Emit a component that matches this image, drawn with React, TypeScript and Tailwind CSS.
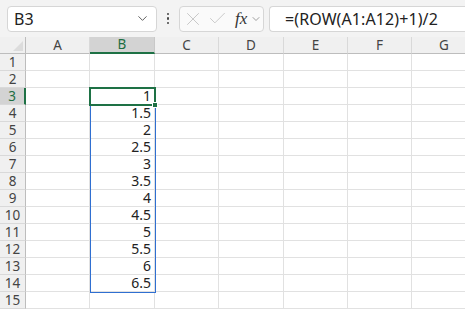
import { ChevronDown, X, Check } from 'lucide-react';

const cols = [
  { label: 'A', w: 'w-[64px]' },
  { label: 'B', w: 'w-[65px]' },
  { label: 'C', w: 'w-[64px]' },
  { label: 'D', w: 'w-[65px]' },
  { label: 'E', w: 'w-[64px]' },
  { label: 'F', w: 'w-[64px]' },
  { label: 'G', w: 'w-[65px]' },
];

const values: Record<number, string> = {
  3: '1', 4: '1.5', 5: '2', 6: '2.5', 7: '3', 8: '3.5', 9: '4',
  10: '4.5', 11: '5', 12: '5.5', 13: '6', 14: '6.5',
};

const rows = Array.from({ length: 15 }, (_, i) => i + 1);

function FormulaBar() {
  return (
    <div className="flex h-[37px] items-center bg-[#f3f3f3] pl-[7px]">
      <div className="flex h-[26px] w-[150px] items-center justify-between rounded-[4px] border border-[#d6d6d6] bg-white pl-[6px] pr-[6px]">
        <span className="text-[16px] leading-none text-[#222]">B3</span>
        <ChevronDown size={15} strokeWidth={1.5} className="text-[#555]" />
      </div>
      <div className="flex w-[22px] flex-col items-center gap-[2px]">
        <span className="h-[2.5px] w-[2.5px] rounded-full bg-[#444]" />
        <span className="h-[2.5px] w-[2.5px] rounded-full bg-[#444]" />
        <span className="h-[2.5px] w-[2.5px] rounded-full bg-[#444]" />
      </div>
      <div className="flex h-[26px] w-[85px] items-center rounded-[4px] border border-[#d6d6d6] bg-[#fafafa] pl-[2px]">
        <X size={22} strokeWidth={1} className="text-[#c4c4c4]" />
        <Check size={21} strokeWidth={1} className="ml-[3px] text-[#c4c4c4]" />
        <span className="ml-[7px] font-['Liberation_Serif',serif] text-[17px] italic leading-none text-[#333]">fx</span>
        <ChevronDown size={12} strokeWidth={1.4} className="ml-[3px] text-[#777]" />
      </div>
      <div className="ml-[5px] flex h-[26px] flex-1 items-center rounded-l-[4px] border border-r-0 border-[#d6d6d6] bg-white pl-[15px]">
        <span className="text-[16px] leading-none tracking-[0.1px] text-[#222]">=(ROW(A1:A12)+1)/2</span>
      </div>
    </div>
  );
}

function Grid() {
  return (
    <div className="relative">
      <div className="flex h-[17px] bg-[#f0f0f0]">
        <div className="relative h-[17px] w-[26px] shrink-0 border-b border-r border-[#bdbdbd]">
          <div className="absolute bottom-[2px] right-[2px] h-0 w-0 border-b-[10px] border-l-[10px] border-b-[#dcdcdc] border-l-transparent" />
        </div>
        {cols.map((c) => (
          <div
            key={c.label}
            className={`flex h-[17px] shrink-0 items-center justify-center border-r text-[13.5px] ${c.w} ${
              c.label === 'B'
                ? 'border-b-2 border-r-[#c8c8c8] border-b-[#1e7145] bg-[#d3d3d3] leading-[15px] text-[#1e6e42]'
                : 'border-b border-r-[#d9d9d9] border-b-[#bdbdbd] leading-[16px] text-[#444]'
            }`}
          >
            {c.label}
          </div>
        ))}
      </div>
      {rows.map((r) => (
        <div key={r} className="flex h-[17px]">
          <div
            className={`flex h-[17px] w-[26px] shrink-0 items-center justify-center border-b border-b-[#d9d9d9] text-[13.5px] leading-[16px] ${
              r === 3
                ? 'border-r-2 border-r-[#1e7145] bg-[#d3d3d3] text-[#1e6e42]'
                : 'border-r border-r-[#bdbdbd] bg-[#f0f0f0] text-[#444]'
            }`}
          >
            {r}
          </div>
          {cols.map((c) => (
            <div
              key={c.label}
              className={`flex h-[17px] shrink-0 items-center justify-end border-b border-r border-[#e1e1e1] pr-[3px] text-[14px] leading-[16px] text-[#222] ${c.w}`}
            >
              {c.label === 'B' ? values[r] : ''}
            </div>
          ))}
        </div>
      ))}
      <div className="pointer-events-none absolute left-[90px] top-[51px] h-[205px] w-[66px] border border-[#2f6fd1]" />
      <div className="pointer-events-none absolute left-[89px] top-[50px] h-[19px] w-[67px] border-2 border-[#1e7145]" />
      <div className="pointer-events-none absolute left-[152px] top-[65px] h-[6px] w-[6px] border border-white bg-[#1e7145]" />
    </div>
  );
}

export default function App() {
  return (
    <div className="h-[310px] w-[465px] overflow-hidden bg-white font-['Noto_Sans','Open_Sans',sans-serif]">
      <FormulaBar />
      <Grid />
    </div>
  );
}
